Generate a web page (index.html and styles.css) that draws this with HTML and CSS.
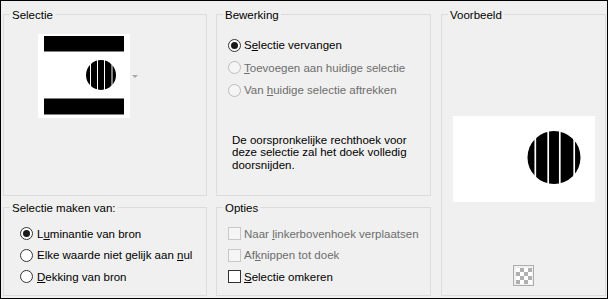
FILE: index.html
```html
<!DOCTYPE html>
<html lang="nl">
<head>
<meta charset="utf-8">
<title>Selectie</title>
<link rel="stylesheet" href="styles.css">
</head>
<body>
<div class="window">
  <div class="group g-selectie">
    <div class="title">Selectie</div>
    <div class="combo">
      <div class="thumb">
        <svg width="92" height="84" viewBox="0 0 92 84">
          <rect width="92" height="84" fill="#fff"/>
          <rect x="6" y="2" width="80" height="15.5" fill="#000"/>
          <rect x="6" y="64.5" width="80" height="16" fill="#000"/>
          <circle cx="63" cy="41" r="15" fill="#000"/>
          <g stroke="#fff" stroke-width="1">
            <line x1="52.5" y1="24" x2="52.5" y2="58"/>
            <line x1="59.5" y1="24" x2="59.5" y2="58"/>
            <line x1="66.5" y1="24" x2="66.5" y2="58"/>
            <line x1="74" y1="24" x2="74" y2="58"/>
          </g>
        </svg>
      </div>
      <span class="arrow"></span>
    </div>
  </div>

  <div class="group g-bewerking">
    <div class="title">Bewerking</div>
    <div class="opts opts-wide">
      <div class="opt"><span class="radio checked"></span><span>S<u>e</u>lectie vervangen</span></div>
      <div class="opt disabled"><span class="radio"></span><span><u>T</u>oevoegen aan huidige selectie</span></div>
      <div class="opt disabled"><span class="radio"></span><span>Van <u>h</u>uidige selectie aftrekken</span></div>
    </div>
    <p class="desc">De oorspronkelijke rechthoek voor<br>deze selectie zal het doek volledig<br>doorsnijden.</p>
  </div>

  <div class="group g-voorbeeld">
    <div class="title">Voorbeeld</div>
    <div class="preview">
      <svg width="142" height="86" viewBox="0 0 142 86">
        <rect width="142" height="86" fill="#fff"/>
        <circle cx="101" cy="41.5" r="26.5" fill="#000"/>
        <g stroke="#fff" stroke-width="1.7">
          <line x1="82.3" y1="10" x2="82.3" y2="75"/>
          <line x1="95.2" y1="10" x2="95.2" y2="75"/>
          <line x1="106.8" y1="10" x2="106.8" y2="75"/>
          <line x1="121.2" y1="10" x2="121.2" y2="75"/>
        </g>
      </svg>
    </div>
    <div class="checker-btn"><span class="checker"></span></div>
  </div>

  <div class="group g-maken">
    <div class="title">Selectie maken van:</div>
    <div class="opts opts-narrow">
      <div class="opt"><span class="radio checked"></span><span>L<u>u</u>minantie van bron</span></div>
      <div class="opt"><span class="radio"></span><span>Elke waarde niet gelijk aan <u>n</u>ul</span></div>
      <div class="opt"><span class="radio"></span><span><u>D</u>ekking van bron</span></div>
    </div>
  </div>

  <div class="group g-opties">
    <div class="title">Opties</div>
    <div class="opts opts-narrow opts-check">
      <div class="opt disabled"><span class="check"></span><span>Naar <u>l</u>inkerbovenhoek verplaatsen</span></div>
      <div class="opt disabled"><span class="check"></span><span>Af<u>k</u>nippen tot doek</span></div>
      <div class="opt"><span class="check"></span><span><u>S</u>electie omkeren</span></div>
    </div>
  </div>
</div>
</body>
</html>
```

FILE: styles.css
```css
html, body {
  margin: 0;
  padding: 0;
  background: #f0f0f0;
}

.window {
  box-sizing: border-box;
  width: 608px;
  height: 299px;
  border: 1px solid #000;
  background: #f0f0f0;
  padding: 13px 1px 2px 2px;
  display: grid;
  grid-template-columns: 204px 215px 166px;
  grid-template-rows: 182px 89px;
  column-gap: 9px;
  row-gap: 11px;
  font-family: "Liberation Sans", Arial, sans-serif;
  font-size: 11.5px;
  color: #000;
}

.group {
  border: 1px solid #dcdcdc;
  min-width: 0;
  min-height: 0;
}

.g-selectie { grid-column: 1; grid-row: 1; }
.g-bewerking { grid-column: 2; grid-row: 1; }
.g-voorbeeld {
  grid-column: 3;
  grid-row: 1 / 3;
  margin-left: 1px;
  display: flex;
  flex-direction: column;
  align-items: center;
}
.g-voorbeeld .title { align-self: flex-start; }
.g-maken { grid-column: 1; grid-row: 2; }
.g-opties { grid-column: 2; grid-row: 2; }

.title {
  width: fit-content;
  margin: -7px 0 0 6px;
  padding: 0 2px;
  line-height: 14px;
  background: #f0f0f0;
}

/* Selectie */
.combo {
  display: flex;
  align-items: center;
  margin: 12px 0 0 34px;
}
.thumb {
  width: 92px;
  height: 84px;
}
.thumb svg, .preview svg { display: block; }
.arrow {
  width: 0;
  height: 0;
  margin-left: 2px;
  border-left: 3px solid transparent;
  border-right: 3px solid transparent;
  border-top: 3px solid #a8a8a8;
}

/* options */
.opts { display: flex; flex-direction: column; }
.opts-wide { margin-top: 12px; padding-left: 11px; }
.opts-wide .opt { height: 22.5px; }
.opts-narrow { margin-top: 8px; }
.g-maken .opts { padding-left: 16px; }
.g-opties .opts { padding-left: 11px; }
.opts-narrow .opt { height: 21.5px; }

.opt {
  display: flex;
  align-items: center;
  gap: 3px;
  line-height: 14px;
  white-space: nowrap;
}
.g-maken .opt { gap: 4px; }
.opt.disabled { color: #6d6d6d; }

.radio {
  box-sizing: border-box;
  width: 13px;
  height: 13px;
  flex: none;
  border: 1px solid #333;
  border-radius: 50%;
  background: #fff;
  display: flex;
  align-items: center;
  justify-content: center;
}
.radio.checked::after {
  content: "";
  width: 7px;
  height: 7px;
  border-radius: 50%;
  background: #1a1a1a;
}
.disabled .radio { border-color: #bcbcbc; background: #f5f5f5; }

.check {
  box-sizing: border-box;
  width: 13px;
  height: 13px;
  flex: none;
  border: 1px solid #333;
  background: #fff;
}
.disabled .check { border-color: #c8c8c8; background: #f5f5f5; }

u { text-underline-offset: 1px; }

.desc {
  margin: 32px 0 0 15px;
  line-height: 12.5px;
}

/* Voorbeeld */
.preview {
  width: 142px;
  height: 86px;
  margin-top: 94px;
}
.checker-btn {
  box-sizing: border-box;
  width: 21px;
  height: 21px;
  margin-top: 63px;
  border: 1px solid #adadad;
  background: #f0f0f0;
  display: flex;
  align-items: center;
  justify-content: center;
}
.checker {
  width: 16px;
  height: 16px;
  background-color: #fff;
  background-image: conic-gradient(#b0b0b0 25%, #fff 0 50%, #b0b0b0 0 75%, #fff 0);
  background-size: 8px 8px;
}
```
